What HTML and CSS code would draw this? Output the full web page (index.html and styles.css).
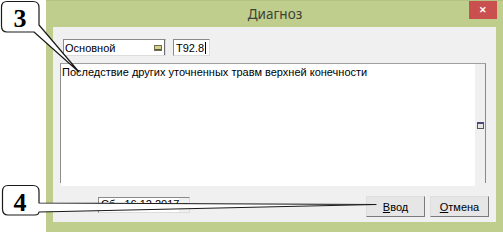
FILE: index.html
```html
<!DOCTYPE html>
<html lang="ru">
<head>
    <meta charset="UTF-8">
    <title>Диагноз</title>
    <link rel="stylesheet" href="styles.css">
</head>
<body>

<div class="screen">

    <!-- Dialog window -->
    <div class="window">
        <div class="titlebar">
            <span class="title">Диагноз</span>
            <div class="close">&#x2715;</div>
        </div>

        <div class="client">
            <div class="row-top">
                <div class="combo">
                    <span class="combo-text">Основной</span>
                    <span class="combo-btn"><i></i></span>
                </div>
                <div class="code">T92.8<span class="caret"></span></div>
            </div>

            <div class="memo">
                <div class="memo-text">Последствие других уточненных травм верхней конечности</div>
                <div class="memo-side"><i></i></div>
            </div>

            <div class="row-bottom">
                <div class="date">
                    <span class="date-text">Сб., 16.12.2017</span>
                    <span class="date-btn">&#9662;</span>
                </div>
                <div class="buttons">
                    <button class="btn"><u>В</u>вод</button>
                    <button class="btn"><u>О</u>тмена</button>
                </div>
            </div>
        </div>
    </div>

    <!-- Numbered callouts drawn over the screenshot -->
    <svg class="callouts" width="503" height="233" viewBox="0 0 503 233">
        <path class="bubble" d="M7 1.5 H33 Q39 1.5 39 7.5 V25 L79 72 L34 32 H7 Q1.5 32 1.5 26 V7.5 Q1.5 1.5 7 1.5 Z"/>
        <text class="num" x="20" y="27">3</text>

        <path class="bubble" d="M8 185.5 H33 Q39 185.5 39 191.5 V203 L376 204.5 L39 212 Q38.5 215 35 215 H8 Q2.5 215 2.5 209 V191.5 Q2.5 185.5 8 185.5 Z"/>
        <text class="num" x="20" y="211">4</text>
    </svg>

</div>

</body>
</html>
```

FILE: styles.css
```css
body {
    margin: 0;
    background: #ffffff;
    font-family: "Liberation Sans", Arial, sans-serif;
}

.screen {
    position: relative;
    width: 503px;
    height: 233px;
    overflow: hidden;
}

.window {
    margin-left: 46px;
    width: 457px;
    height: 232px;
    background: #bfce8d;
    padding: 0 7px 10px 7px;
    box-sizing: border-box;
    display: flex;
    flex-direction: column;
}

.titlebar {
    height: 27px;
    display: grid;
    grid-template-columns: 1fr auto 1fr;
    align-items: start;
    margin: 0 -7px;
    padding: 0 6px 0 7px;
    border-top: 1px solid #b3c283;
    box-sizing: border-box;
}

.title {
    grid-column: 2;
    font-family: "Noto Sans", sans-serif;
    font-size: 13.5px;
    color: #3e4236;
    line-height: 26px;
}

.close {
    grid-column: 3;
    justify-self: end;
    width: 28px;
    height: 18px;
    background: #c9504f;
    color: #ffffff;
    font-size: 9px;
    font-weight: bold;
    text-align: center;
    line-height: 18px;
}

.client {
    flex: 1;
    background: #f0f0f0;
    padding: 12px 7px 0 7px;
    font-size: 11px;
    color: #000000;
}

.row-top {
    display: flex;
    gap: 7px;
    padding-left: 3px;
    height: 17px;
}

.combo {
    width: 103px;
    display: flex;
    align-items: center;
    background: #ffffff;
    border: 1px solid #a9a9a9;
    border-color: #8a8a8a #dcdcdc #dcdcdc #8a8a8a;
    box-sizing: border-box;
}

.combo-text {
    flex: 1;
    padding-left: 1px;
}

.combo-btn {
    width: 14px;
    height: 100%;
    display: flex;
    align-items: center;
    justify-content: center;
    border-right: 1px solid #6d6d6d;
    box-sizing: border-box;
}

.combo-btn i {
    width: 6px;
    height: 4px;
    border: 1px solid #6e6e50;
    background: #d7d08a;
    box-shadow: inset 0 -1px 0 #57573e;
}

.code {
    width: 37px;
    display: flex;
    align-items: center;
    background: #ffffff;
    border: 1px solid #a9a9a9;
    border-color: #8a8a8a #dcdcdc #dcdcdc #8a8a8a;
    box-sizing: border-box;
    padding-left: 2px;
}

.caret {
    width: 1px;
    height: 12px;
    background: #000000;
    margin-left: 1px;
}

.memo {
    margin-top: 7px;
    margin-right: 3px;
    height: 120px;
    display: flex;
    border-left: 1px solid #8e8e8e;
    border-top: 1px solid #a0a0a0;
    border-right: 1px solid #8a8a8a;
    box-sizing: border-box;
}

.memo-text {
    flex: 1;
    background: #ffffff;
    padding: 2px 1px;
    line-height: 13px;
    height: 118px;
}

.memo-side {
    width: 10px;
    display: flex;
    align-items: center;
    justify-content: center;
    padding-top: 3px;
}

.memo-side i {
    width: 5px;
    height: 4px;
    border: 1px solid #555555;
    border-top: 2px solid #4a4a78;
    background: #e6e6e6;
}

.row-bottom {
    display: flex;
    align-items: flex-start;
    margin-top: 13px;
}

.date {
    margin-left: 38px;
    margin-top: 1px;
    width: 92px;
    height: 16px;
    display: flex;
    align-items: flex-start;
    background: #ffffff;
    border: 1px solid #8a8a8a;
    border-color: #8a8a8a #dcdcdc #dcdcdc #8a8a8a;
    box-sizing: border-box;
    overflow: hidden;
    line-height: 12px;
}

.date-text {
    flex: 1;
    padding-left: 2px;
    white-space: nowrap;
}

.date-btn {
    width: 12px;
    height: 14px;
    flex-shrink: 0;
    font-size: 9px;
    line-height: 14px;
    text-align: center;
    background: #f0f0f0;
}

.buttons {
    margin-left: auto;
    display: flex;
    gap: 5px;
}

.btn {
    width: 59px;
    height: 21px;
    padding: 0;
    font-family: "Liberation Sans", Arial, sans-serif;
    font-size: 11px;
    color: #000000;
    background: #e6e6e6;
    border: 1px solid #adadad;
    border-color: #dedede #7a7a7a #7a7a7a #dedede;
}

.callouts {
    position: absolute;
    top: 0;
    left: 0;
    pointer-events: none;
}

.bubble {
    fill: #ffffff;
    stroke: #1a1a1a;
    stroke-width: 1.2;
    stroke-linejoin: round;
}

.num {
    font-family: "Liberation Serif", "Times New Roman", serif;
    font-weight: bold;
    font-size: 26px;
    text-anchor: middle;
    fill: #000000;
}
```
